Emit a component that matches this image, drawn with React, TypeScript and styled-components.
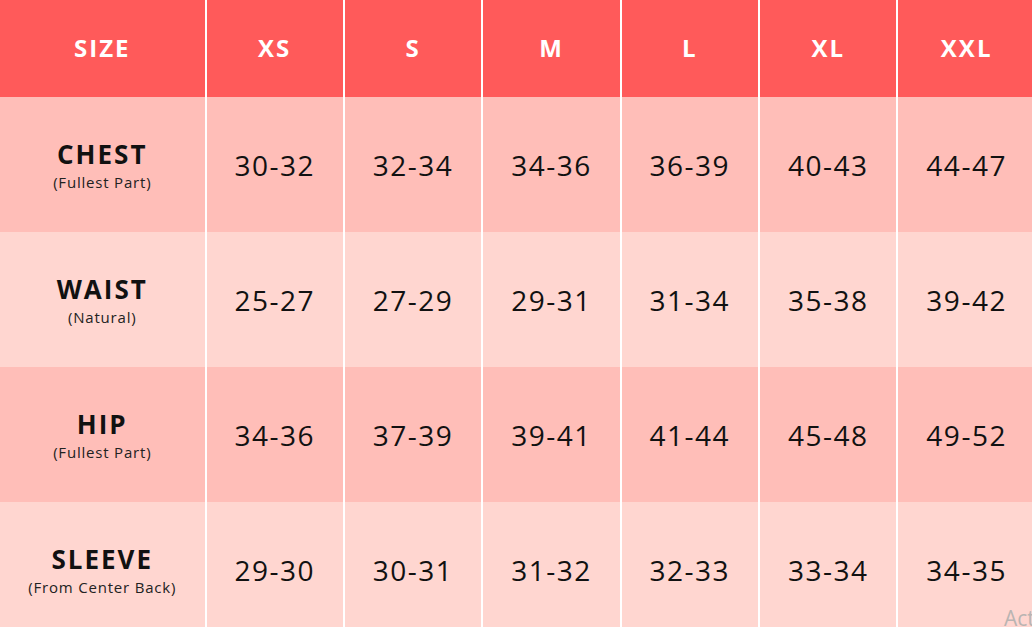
import React from "react";
import styled, { createGlobalStyle } from "styled-components";

const GlobalStyle = createGlobalStyle`
  html, body {
    margin: 0;
    padding: 0;
    overflow: hidden;
    background: #ffffff;
  }
  body {
    font-family: "Open Sans", "Liberation Sans", sans-serif;
  }
`;

const Page = styled("div")`
  position: relative;
  width: 1032px;
  height: 627px;
  overflow: hidden;
`;

const Chart = styled("div")`
  display: grid;
  grid-template-columns: 204.5px repeat(6, 136.4px);
  grid-auto-rows: 135px;
  grid-template-rows: 97px;
  column-gap: 2px;
  background: #ffffff;
  width: 1040px;
`;

const HeadCell = styled("div")`
  background-color: #ff5a5a;
  color: #ffffff;
  display: flex;
  align-items: center;
  justify-content: center;
  font-weight: 700;
  font-size: 24px;
  letter-spacing: 2px;
  padding-bottom: 3px;
`;

interface IRow {
  index: number;
}

const LabelCell = styled("div")<IRow>`
  background-color: ${(props) => (props.index % 2 === 0 ? "#ffbeb8" : "#ffd6d0")};
  display: flex;
  flex-direction: column;
  align-items: center;
  justify-content: center;
  color: #111111;
  padding-top: 4px;
`;

const LabelTitle = styled("span")`
  font-weight: 700;
  font-size: 26px;
  letter-spacing: 2px;
  line-height: 32px;
`;

const LabelNote = styled("span")`
  font-size: 15px;
  letter-spacing: 0.8px;
  line-height: 25px;
  color: #222222;
`;

const ValueCell = styled("div")<IRow>`
  background-color: ${(props) => (props.index % 2 === 0 ? "#ffbeb8" : "#ffd6d0")};
  display: flex;
  align-items: center;
  justify-content: center;
  color: #111111;
  font-size: 28px;
  letter-spacing: 1.5px;
  padding-top: 1px;
`;

const Watermark = styled("div")`
  position: absolute;
  left: 1004px;
  top: 604px;
  color: #b9b4b2;
  font-size: 21px;
  white-space: nowrap;
`;

const sizes = ["XS", "S", "M", "L", "XL", "XXL"];

const rows = [
  { title: "CHEST", note: "(Fullest Part)", values: ["30-32", "32-34", "34-36", "36-39", "40-43", "44-47"] },
  { title: "WAIST", note: "(Natural)", values: ["25-27", "27-29", "29-31", "31-34", "35-38", "39-42"] },
  { title: "HIP", note: "(Fullest Part)", values: ["34-36", "37-39", "39-41", "41-44", "45-48", "49-52"] },
  { title: "SLEEVE", note: "(From Center Back)", values: ["29-30", "30-31", "31-32", "32-33", "33-34", "34-35"] },
];

export default function App() {
  return (
    <Page>
      <GlobalStyle />
      <Chart>
        <HeadCell>SIZE</HeadCell>
        {sizes.map((s) => (
          <HeadCell key={s}>{s}</HeadCell>
        ))}
        {rows.map((row, i) => (
          <React.Fragment key={row.title}>
            <LabelCell index={i}>
              <LabelTitle>{row.title}</LabelTitle>
              <LabelNote>{row.note}</LabelNote>
            </LabelCell>
            {row.values.map((v, j) => (
              <ValueCell index={i} key={j}>
                {v}
              </ValueCell>
            ))}
          </React.Fragment>
        ))}
      </Chart>
      <Watermark>Activate Windows</Watermark>
    </Page>
  );
}
